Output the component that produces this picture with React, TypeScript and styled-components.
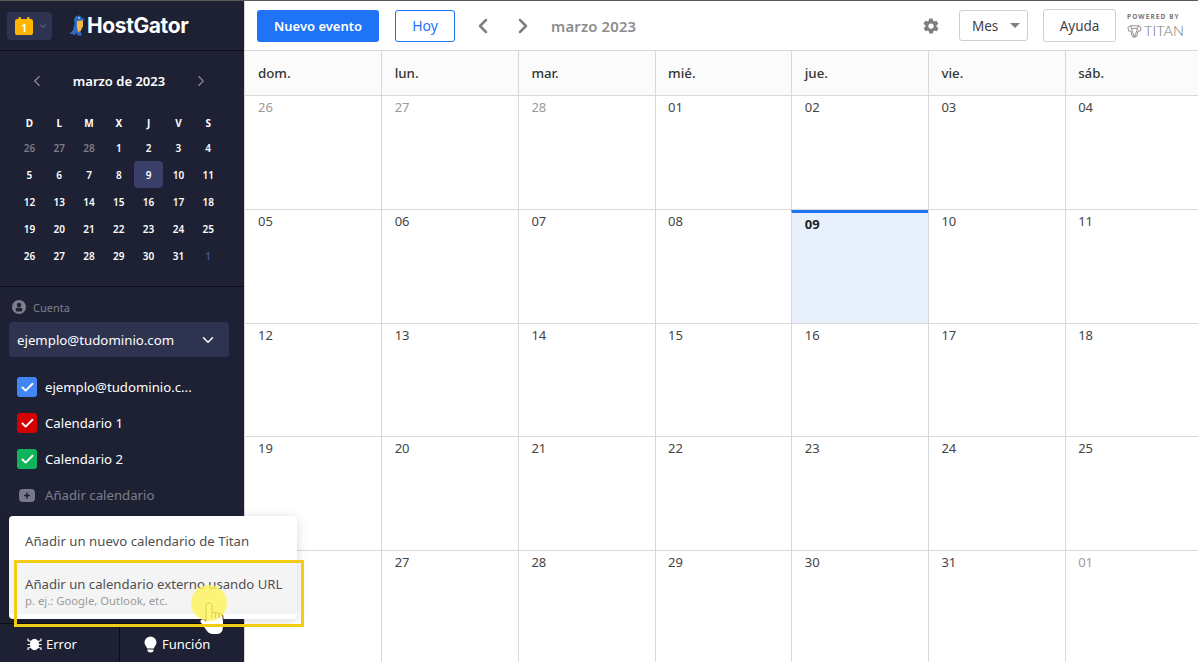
import styled, { createGlobalStyle } from 'styled-components';
import { ChevronDown, ChevronLeft, ChevronRight, Check } from 'lucide-react';

const GlobalStyle = createGlobalStyle`
  html, body {
    margin: 0;
    padding: 0;
    height: 100%;
    overflow: hidden;
    background: #fff;
  }
  #root {
    height: 100%;
  }
  * {
    box-sizing: border-box;
  }
`;

const FONT = `"Noto Sans", "Open Sans", sans-serif`;

const Page = styled.div`
  display: flex;
  width: 1198px;
  height: 662px;
  overflow: hidden;
  position: relative;
  border-top: 1px solid #5a5a5a;
  font-family: ${FONT};
`;

const Sidebar = styled.aside`
  width: 244px;
  flex: none;
  display: flex;
  flex-direction: column;
  background: #1e2134;
  color: #fff;
`;

const BrandBar = styled.div`
  height: 50px;
  flex: none;
  display: flex;
  align-items: center;
  padding: 0 0 0 7px;
  border-bottom: 1px solid #0c0d15;
`;

const AppSwitch = styled.div`
  width: 45px;
  height: 28px;
  border-radius: 4px;
  background: #2e3350;
  display: flex;
  align-items: center;
  padding-left: 8px;
  gap: 5px;
  color: #7d8092;
`;

const Brand = styled.div`
  display: flex;
  align-items: center;
  margin-left: 17px;
  font-family: Inter, "Liberation Sans", sans-serif;
  font-weight: 700;
  font-size: 21px;
  letter-spacing: -0.4px;
  color: #fff;
`;

const MiniCal = styled.section`
  height: 236px;
  flex: none;
  padding: 14px 0 0 14.5px;
  border-bottom: 1px solid #0c0d15;
`;

const MiniHead = styled.div`
  display: flex;
  align-items: center;
  justify-content: space-between;
  width: 195.5px;
  padding-left: 13.5px;
  height: 32px;
  margin-bottom: 12px;
  font-size: 13px;
  font-weight: 600;
  color: #8a8c99;
`;

const MiniTitle = styled.span`
  color: #fff;
`;

const MiniGrid = styled.div`
  display: grid;
  grid-template-columns: repeat(7, 29.8px);
  grid-auto-rows: 27px;
  margin-top: -2px;
`;

const MiniLabel = styled.div`
  display: flex;
  align-items: center;
  justify-content: center;
  height: 20px;
  margin-top: 6px;
  font-size: 10px;
  font-weight: 700;
  color: #fff;
`;

const MiniDay = styled.div<{ $tone?: 'muted' | 'next'; $current?: boolean }>`
  display: flex;
  align-items: center;
  justify-content: center;
  font-size: 10px;
  font-weight: 600;
  border-radius: 4px;
  color: ${(p) => (p.$tone === 'muted' ? '#7b7d8a' : p.$tone === 'next' ? '#41598f' : '#fff')};
  background: ${(p) => (p.$current ? '#3a3f69' : 'transparent')};
`;

const Accounts = styled.section`
  flex: 1;
  min-height: 0;
  padding: 11px 15px 0 9px;
`;

const AccountLabel = styled.div`
  display: flex;
  align-items: center;
  gap: 7px;
  padding-left: 3px;
  height: 18px;
  font-size: 11px;
  color: #7d7f8b;
`;

const AccountSelect = styled.div`
  display: flex;
  align-items: center;
  justify-content: space-between;
  height: 35px;
  margin-top: 6px;
  padding: 0 12px 0 8px;
  border-radius: 4px;
  background: #2e3350;
  font-size: 13.25px;
`;

const CalendarList = styled.div`
  margin-top: 20px;
  padding-left: 8px;
  display: flex;
  flex-direction: column;
  gap: 16px;
`;

const CalendarRow = styled.div`
  display: flex;
  align-items: center;
  gap: 8px;
  height: 20px;
  font-size: 13.2px;
  white-space: nowrap;
`;

const Tick = styled.span<{ $color: string }>`
  width: 20px;
  height: 20px;
  border-radius: 3px;
  display: flex;
  align-items: center;
  justify-content: center;
  background: ${(p) => p.$color};
`;

const AddRow = styled(CalendarRow)`
  color: #7d7f8b;
`;

const AddIcon = styled.span`
  width: 20px;
  display: flex;
  justify-content: center;
`;

const SideFooter = styled.div`
  height: 39px;
  flex: none;
  display: flex;
  padding-top: 2px;
  border-top: 1px solid #0c0d15;
`;

const FooterButton = styled.div<{ $width: number; $inset: number; $gap: number }>`
  width: ${(p) => p.$width}px;
  display: flex;
  align-items: center;
  padding-left: ${(p) => p.$inset}px;
  gap: ${(p) => p.$gap}px;
  font-size: 13px;

  & + & {
    border-left: 1px solid #0c0d15;
  }
`;

const Popover = styled.div`
  position: absolute;
  left: 9px;
  top: 515px;
  width: 288px;
  height: 103px;
  padding-top: 7px;
  border-radius: 4px;
  background: #fff;
  color: #4f4f4f;
  box-shadow: 0 2px 12px rgba(0, 0, 0, 0.16);
  z-index: 3;
`;

const PopItem = styled.div`
  display: flex;
  align-items: center;
  height: 36px;
  padding-left: 16px;
  font-size: 13.2px;
`;

const PopItemActive = styled.div`
  height: 54px;
  margin-top: 1px;
  padding: 15px 0 0 16px;
  background: #f4f4f4;
  font-size: 13.15px;
  line-height: 18px;
`;

const PopHint = styled.div`
  font-size: 11.3px;
  line-height: 16px;
  color: #9a9a9a;
`;

const CursorHand = styled.svg`
  position: absolute;
  left: 200px;
  top: 601px;
  z-index: 4;
`;

const CursorDot = styled.div`
  position: absolute;
  left: 191px;
  top: 584px;
  width: 36px;
  height: 36px;
  border-radius: 50%;
  background: rgba(253, 244, 90, 0.8);
  z-index: 5;
`;

const Highlight = styled.div`
  position: absolute;
  left: 14px;
  top: 559px;
  width: 290px;
  height: 67px;
  border: 3px solid #f2cd14;
  z-index: 6;
`;

const Main = styled.main`
  flex: 1;
  min-width: 0;
  display: flex;
  flex-direction: column;
  border-left: 1px solid #d9d9d9;
`;

const TopBar = styled.header`
  height: 50px;
  flex: none;
  display: flex;
  align-items: center;
  padding: 0 14px 0 12px;
  border-bottom: 1px solid #d9d9d9;
`;

const PrimaryButton = styled.button`
  width: 122px;
  height: 32px;
  border: 0;
  border-radius: 3px;
  background: #1f73f5;
  color: #fff;
  font: 600 13px ${FONT};
`;

const TodayButton = styled.button`
  width: 60px;
  height: 32px;
  margin-left: 16px;
  border: 1px solid #1f73f5;
  border-radius: 3px;
  background: #fff;
  color: #1f73f5;
  font: 400 14px ${FONT};
`;

const NavArrows = styled.div`
  display: flex;
  gap: 16px;
  margin-left: 16px;
  color: #7f7f7f;
`;

const MonthTitle = styled.div`
  margin-left: 16px;
  font-size: 14.8px;
  font-weight: 600;
  letter-spacing: 0.2px;
  color: #8c8c8c;
`;

const TopRight = styled.div`
  margin-left: auto;
  display: flex;
  align-items: center;
`;

const ViewSelect = styled.div`
  display: flex;
  align-items: center;
  justify-content: space-between;
  width: 69px;
  height: 31px;
  margin-left: 19px;
  padding: 0 7px 0 12px;
  border: 1px solid #cfcfcf;
  border-radius: 3px;
  font-size: 13.5px;
  color: #3f3f4a;
`;

const Caret = styled.span`
  width: 0;
  height: 0;
  border-left: 5px solid transparent;
  border-right: 5px solid transparent;
  border-top: 5px solid #7f7f7f;
`;

const HelpButton = styled.div`
  display: flex;
  align-items: center;
  justify-content: center;
  width: 73px;
  height: 33px;
  margin-left: 15px;
  border: 1px solid #cfcfcf;
  border-radius: 3px;
  font-size: 13.5px;
  color: #3f3f4a;
`;

const Powered = styled.div`
  width: 57px;
  margin-left: 11px;
  display: flex;
  flex-direction: column;
  color: #777;
`;

const PoweredLabel = styled.div`
  font: 700 6.5px ${FONT};
  letter-spacing: 1.1px;
  line-height: 9px;
  white-space: nowrap;
`;

const TitanLogo = styled.div`
  display: flex;
  align-items: center;
  gap: 2px;
  margin-top: 2px;
  font: 300 14.5px Lato, sans-serif;
  line-height: 16px;
`;

const WeekHead = styled.div`
  height: 45px;
  flex: none;
  display: grid;
  grid-template-columns: repeat(7, 136.7px);
  margin-left: -0.5px;
  background: #fbfbfb;
  border-bottom: 1px solid #d9d9d9;
`;

const WeekLabel = styled.div`
  display: flex;
  align-items: center;
  padding-left: 13.5px;
  font-size: 13.3px;
  font-weight: 500;
  color: #333;

  & + & {
    padding-left: 12.5px;
    border-left: 1px solid #d9d9d9;
  }
`;

const MonthGrid = styled.div`
  flex: 1;
  min-height: 0;
  display: grid;
  grid-template-columns: repeat(7, 136.7px);
  grid-template-rows: repeat(5, 113.8px);
  margin-left: -0.5px;
  overflow: hidden;
`;

const DayCell = styled.div<{ $today?: boolean; $muted?: boolean; $first?: boolean }>`
  padding: 2px 0 0 ${(p) => (p.$first ? '13.5px' : '12.5px')};
  font-size: 13px;
  font-weight: ${(p) => (p.$today ? 700 : 400)};
  line-height: 18px;
  color: ${(p) => (p.$today ? '#222' : p.$muted ? '#9a9a9a' : '#444')};
  background: ${(p) => (p.$today ? '#e8f0fc' : '#fff')};
  border-bottom: 1px solid #d9d9d9;
  border-left: ${(p) => (p.$first ? '0' : '1px solid #d9d9d9')};
  border-top: ${(p) => (p.$today ? '3px solid #1f73f5' : '0')};
`;

const miniLabels = ['D', 'L', 'M', 'X', 'J', 'V', 'S'];
const weekLabels = ['dom.', 'lun.', 'mar.', 'mié.', 'jue.', 'vie.', 'sáb.'];

// marzo 2023, con los días de febrero y abril que completan la cuadrícula
const days: { n: number; other: boolean }[] = [
  ...[26, 27, 28].map((n) => ({ n, other: true })),
  ...Array.from({ length: 31 }, (_, i) => ({ n: i + 1, other: false })),
  { n: 1, other: true },
];

const pad = (n: number) => String(n).padStart(2, '0');

const GatorIcon = () => (
  <svg width="17" height="22" viewBox="0 0 17 22" style={{ marginRight: 1 }}>
    <path d="M7 1 L11 0.500 L13 3 L16 4 L13.500 6 L14 11 L11.500 16 L13 20.500 L8.500 20.500 L8 17.500 L5 20.500 L3.500 19 L0.500 19 L4 15 L5.500 9 L5 4 Z" fill="#2c6bc0" />
    <path d="M8 6 L14 5.500 L14 11 L11.500 16 L9 17 L8 12 Z" fill="#f6b73c" />
    <circle cx="10" cy="3" r="0.8" fill="#fff" />
  </svg>
);

const CalendarBadge = () => (
  <svg width="18" height="18" viewBox="0 0 18 18">
    <rect x="0" y="2" width="18" height="16" rx="2" fill="#ffb400" />
    <rect x="3.500" y="0" width="2.500" height="4" rx="1" fill="#ffb400" />
    <rect x="12" y="0" width="2.500" height="4" rx="1" fill="#ffb400" />
    <text x="9" y="14.500" textAnchor="middle" fontSize="10" fontWeight="700" fill="#fff" fontFamily="Noto Sans, sans-serif">1</text>
  </svg>
);

const AccountIcon = () => (
  <svg width="14" height="14" viewBox="0 0 14 14">
    <circle cx="7" cy="7" r="7" fill="#7d7f8b" />
    <circle cx="7" cy="5" r="2.200" fill="#1e2134" />
    <rect x="3.600" y="7.800" width="6.800" height="3.600" rx="1.600" fill="#1e2134" />
  </svg>
);

const PlusIcon = () => (
  <svg width="16" height="13" viewBox="0 0 16 13">
    <rect width="16" height="13" rx="4" fill="#77798a" />
    <path d="M8 3.500v6M5 6.500h6" stroke="#1e2134" strokeWidth="1.500" />
  </svg>
);

const GearIcon = () => (
  <svg width="18" height="18" viewBox="0 0 24 24" fill="#7f7f7f">
    <path d="M19.400 13a7.500 7.500 0 0 0 0-2l2.100-1.600a.5.5 0 0 0 .1-.7l-2-3.400a.5.5 0 0 0-.6-.2l-2.500 1a7.300 7.300 0 0 0-1.700-1l-.4-2.600a.5.5 0 0 0-.5-.5h-4a.5.5 0 0 0-.5.4l-.4 2.700a7.300 7.300 0 0 0-1.700 1l-2.500-1a.5.5 0 0 0-.6.2l-2 3.400a.5.5 0 0 0 .1.7L4.600 11a7.500 7.500 0 0 0 0 2l-2.100 1.600a.5.5 0 0 0-.1.7l2 3.400c.1.2.4.3.6.2l2.500-1c.5.4 1.100.7 1.700 1l.4 2.600c0 .3.2.5.5.5h4c.3 0 .5-.2.5-.4l.4-2.700c.6-.3 1.200-.6 1.700-1l2.500 1c.2.1.5 0 .6-.2l2-3.400a.5.5 0 0 0-.1-.7ZM12 15.500a3.500 3.500 0 1 1 0-7 3.500 3.500 0 0 1 0 7Z" />
  </svg>
);

const TitanMark = () => (
  <svg width="17" height="15" viewBox="0 0 17 15" fill="none" stroke="#777" strokeWidth="0.900">
    <path d="M1 3 L4 1 H13 L16 3 L15 7 L12.500 7 L11 13 L8.500 14 L6 13 L4.500 7 L2 7 Z" />
    <path d="M4 1 L5 4 H12 L13 1 M5 4 L8.500 14 L12 4" />
  </svg>
);

const BugIcon = () => (
  <svg width="15" height="14" viewBox="0 0 15 14" fill="none" stroke="#fff" strokeWidth="1.200">
    <ellipse cx="7.500" cy="7.500" rx="4.600" ry="5.800" fill="#fff" stroke="none" />
    <path d="M1 1.500 L1 3.500 L4 4.500 M14 1.500 L14 3.500 L11 4.500 M0.500 7.500 H4 M14.500 7.500 H11 M1 13 L1 11 L4 10.500 M14 13 L14 11 L11 10.500" />
  </svg>
);

const BulbIcon = () => (
  <svg width="13" height="17" viewBox="0 0 13 17" fill="#fff">
    <path d="M6.500 0.500 A6 6 0 0 1 12.500 6.500 C12.500 9 10.500 10.200 9.800 12.500 H3.200 C2.500 10.200 0.500 9 0.500 6.500 A6 6 0 0 1 6.500 0.500 Z" />
    <path d="M3.500 13.500 H9.500 V14.500 C9.500 15.800 8 16.500 6.500 16.500 C5 16.500 3.500 15.800 3.500 14.500 Z" />
  </svg>
);

const App = () => {
  return (
    <>
      <GlobalStyle />
      <Page>
        <Sidebar>
          <BrandBar>
            <AppSwitch>
              <CalendarBadge />
              <ChevronDown size={10} />
            </AppSwitch>
            <Brand>
              <GatorIcon />
              HostGator
            </Brand>
          </BrandBar>
          <MiniCal>
            <MiniHead>
              <ChevronLeft size={18} strokeWidth={1.5} />
              <MiniTitle>marzo de 2023</MiniTitle>
              <ChevronRight size={18} strokeWidth={1.5} />
            </MiniHead>
            <MiniGrid>
              {miniLabels.map((l) => (
                <MiniLabel key={l}>{l}</MiniLabel>
              ))}
              {days.map((d, i) => (
                <MiniDay
                  key={i}
                  $tone={d.other ? (i < 7 ? 'muted' : 'next') : undefined}
                  $current={!d.other && d.n === 9}
                >
                  {d.n}
                </MiniDay>
              ))}
            </MiniGrid>
          </MiniCal>
          <Accounts>
            <AccountLabel>
              <AccountIcon />
              Cuenta
            </AccountLabel>
            <AccountSelect>
              ejemplo@tudominio.com
              <ChevronDown size={18} />
            </AccountSelect>
            <CalendarList>
              <CalendarRow>
                <Tick $color="#4285f4">
                  <Check size={15} strokeWidth={3} color="#fff" />
                </Tick>
                ejemplo@tudominio.c...
              </CalendarRow>
              <CalendarRow>
                <Tick $color="#d50000">
                  <Check size={15} strokeWidth={3} color="#fff" />
                </Tick>
                Calendario 1
              </CalendarRow>
              <CalendarRow>
                <Tick $color="#0fb45a">
                  <Check size={15} strokeWidth={3} color="#fff" />
                </Tick>
                Calendario 2
              </CalendarRow>
              <AddRow>
                <AddIcon>
                  <PlusIcon />
                </AddIcon>
                Añadir calendario
              </AddRow>
            </CalendarList>
          </Accounts>
          <SideFooter>
            <FooterButton $width={119} $inset={27} $gap={4}>
              <BugIcon />
              Error
            </FooterButton>
            <FooterButton $width={125} $inset={24} $gap={5}>
              <BulbIcon />
              Función
            </FooterButton>
          </SideFooter>
        </Sidebar>

        <Main>
          <TopBar>
            <PrimaryButton>Nuevo evento</PrimaryButton>
            <TodayButton>Hoy</TodayButton>
            <NavArrows>
              <ChevronLeft size={24} strokeWidth={2.5} />
              <ChevronRight size={24} strokeWidth={2.5} />
            </NavArrows>
            <MonthTitle>marzo 2023</MonthTitle>
            <TopRight>
              <GearIcon />
              <ViewSelect>
                Mes
                <Caret />
              </ViewSelect>
              <HelpButton>Ayuda</HelpButton>
              <Powered>
                <PoweredLabel>POWERED BY</PoweredLabel>
                <TitanLogo>
                  <TitanMark />
                  TITAN
                </TitanLogo>
              </Powered>
            </TopRight>
          </TopBar>
          <WeekHead>
            {weekLabels.map((l) => (
              <WeekLabel key={l}>{l}</WeekLabel>
            ))}
          </WeekHead>
          <MonthGrid>
            {days.map((d, i) => (
              <DayCell
                key={i}
                $first={i % 7 === 0}
                $muted={d.other}
                $today={!d.other && d.n === 9}
              >
                {pad(d.n)}
              </DayCell>
            ))}
          </MonthGrid>
        </Main>

        <Popover>
          <PopItem>Añadir un nuevo calendario de Titan</PopItem>
          <PopItemActive>
            Añadir un calendario externo usando URL
            <PopHint>p. ej.: Google, Outlook, etc.</PopHint>
          </PopItemActive>
        </Popover>
        <CursorHand width="24" height="33" viewBox="0 0 24 33">
          <path
            d="M6 4 a3 3 0 0 1 6 0 V10 L21 12 Q23 12.500 23 15 V24 Q23 32 17 32 H12 Q9 32 7 29 L0.500 20 Q0 17.500 3 17.500 L6 19.500 Z"
            fill="#fff"
          />
          <path
            d="M6 19 V4 a3 3 0 0 1 6 0 V10 L21 12 Q23 12.500 23 15 V18 M12 10v6M15.500 11v5M19 11.500v4.500"
            fill="none"
            stroke="#7a3a00"
            strokeWidth="1"
          />
        </CursorHand>
        <CursorDot />
        <Highlight />
      </Page>
    </>
  );
};

export default App;
